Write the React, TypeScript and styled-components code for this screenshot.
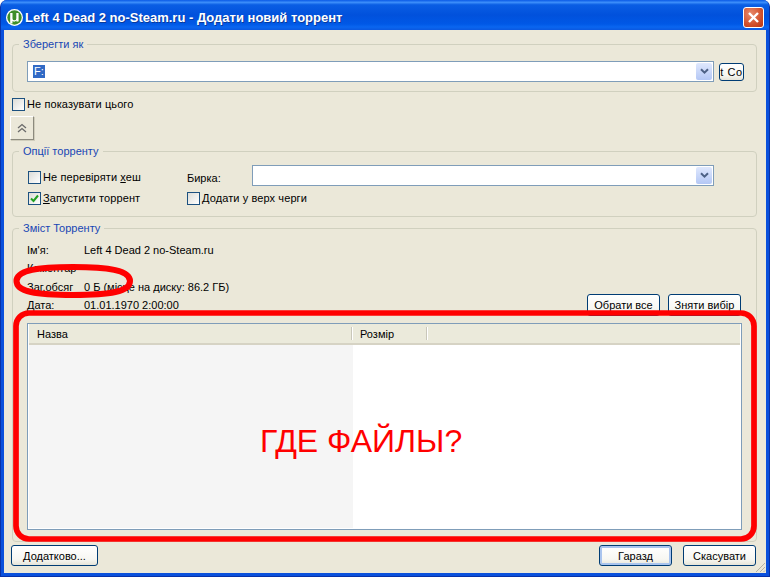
import React from "react";
import styled, { createGlobalStyle } from "styled-components";

const Global = createGlobalStyle`
  html, body { margin: 0; padding: 0; background: #fff; }
  * { box-sizing: border-box; }
  body { font-family: "Liberation Sans", Arial, sans-serif; }
`;

const Win = styled.div`
  position: relative;
  width: 770px;
  height: 577px;
  display: flex;
  flex-direction: column;
  border-radius: 7px 7px 0 0;
  background: #0a50dc;
  border: 1px solid #0831a8;
  border-top: none;
  overflow: hidden;
  font-size: 11px;
  color: #000;
`;
const TitleBar = styled.div`
  height: 30px;
  margin: 0 -1px;
  flex: none;
  display: flex;
  align-items: center;
  padding: 4px 6px 0 6px;
  gap: 2px;
  background: linear-gradient(180deg, #0a5ae6 0%, #3c8efa 8%, #0a5ee4 16%, #0151dc 50%, #0058e6 80%, #0a66f0 90%, #0a58e0 100%);
`;
const Title = styled.div`
  flex: 1;
  color: #fff;
  font-family: "Liberation Sans", Arial, sans-serif;
  font-weight: 700;
  font-size: 13px;
  white-space: nowrap;
  text-shadow: 1px 1px 0 #0a3a9a;
`;
const Close = styled.div`
  width: 21px;
  height: 21px;
  border: 1px solid #fff;
  border-radius: 3px;
  background: radial-gradient(circle at 35% 30%, #e88a6c, #d2502c 60%, #b8340f);
  display: flex;
  align-items: center;
  justify-content: center;
`;
const Body = styled.div`
  flex: 1;
  margin: 0 3px 3px 3px;
  background: #ebe8d9;
  padding: 8px 9px 7px 6px;
  display: flex;
  flex-direction: column;
`;
const Frame = styled.fieldset<{ $h: number; $top?: number }>`
  margin: ${(p) => p.$top ?? 0}px 0 0 2px;
  padding: 0;
  height: ${(p) => p.$h}px;
  flex: none;
  border: 1px solid #d0d0bf;
  border-radius: 4px;
  min-width: 0;
`;
const Legend = styled.legend`
  margin-left: 6px;
  padding: 0 4px;
  color: #1846b4;
  font-size: 11px;
  line-height: 13px;
`;
const SaveRow = styled.div`
  display: flex;
  align-items: center;
  gap: 5px;
  padding: 10px 0 0 14px;
`;
const Combo = styled.div<{ $w: number }>`
  width: ${(p) => p.$w}px;
  height: 21px;
  background: #fff;
  border: 1px solid #7f9db9;
  display: flex;
  align-items: center;
  justify-content: space-between;
  padding: 0 1px 0 5px;
`;
const GridCombo = styled(Combo)`
  margin-bottom: 4px;
`;
const Selected = styled.span`
  background: #316ac5;
  color: #fff;
  line-height: 13px;
  padding: 0 1px;
`;
const DropBtn = styled.div`
  width: 16px;
  height: 17px;
  border-radius: 2px;
  background: linear-gradient(180deg, #dfe8fd, #b4c7f5);
  display: flex;
  align-items: center;
  justify-content: center;
`;
const Btn = styled.div<{ $w: number; $def?: boolean }>`
  width: ${(p) => p.$w}px;
  height: 21px;
  flex: none;
  border: 1px solid #003c74;
  border-radius: 3px;
  background: linear-gradient(180deg, #fff 0%, #f7f7f2 70%, #e6e4d8 100%);
  display: flex;
  align-items: center;
  justify-content: center;
  white-space: nowrap;
  overflow: hidden;
  box-shadow: ${(p) => (p.$def ? "inset 0 0 0 2px #a9c4ee" : "none")};
`;
const SmallBtn = styled(Btn)`
  height: 18px;
  letter-spacing: 0.6px;
`;
const Check = styled.div`
  width: 13px;
  height: 13px;
  flex: none;
  border: 1px solid #1c5180;
  background: linear-gradient(135deg, #dcdcd7, #fff);
  display: flex;
  align-items: center;
  justify-content: center;
`;
const CheckRow = styled.label`
  display: flex;
  align-items: center;
  gap: 2px;
  letter-spacing: 0.1px;
  line-height: 13px;
  white-space: nowrap;
`;
const TopCheck = styled(CheckRow)`
  margin: 6px 0 0 2px;
`;
const WideCheck = styled(CheckRow)`
  grid-column: 2 / 4;
`;
const UpBtn = styled.div`
  width: 24px;
  height: 24px;
  margin-top: 5px;
  background: #ebe8d9;
  border: 1px solid;
  border-color: #fff #8c8a7e #8c8a7e #fff;
  box-shadow: 1px 1px 0 #d0cdbc;
  display: flex;
  align-items: center;
  justify-content: center;
`;
const OptGrid = styled.div`
  display: grid;
  grid-template-columns: 159px 65px 462px;
  grid-auto-rows: 21px;
  padding: 9px 0 0 15px;
  align-items: center;
`;
const Info = styled.div`
  display: grid;
  grid-template-columns: 57px 1fr;
  grid-template-rows: 18px 18px 19px 18px;
  padding: 6px 0 0 14px;
  align-items: center;
  white-space: nowrap;
  height: 71px;
`;
const Wrap = styled.div`
  position: relative;
`;
const SelectBtns = styled.div`
  position: absolute;
  right: 16px;
  top: 77px;
  display: flex;
  gap: 8px;
`;
const WideBtn = styled(Btn)`
  height: 22px;
`;
const Table = styled.div`
  margin: 17px 0 0 14px;
  width: 715px;
  height: 207px;
  border: 1px solid #7f9db9;
  background: #fff;
  display: flex;
  flex-direction: column;
  padding: 0 1px;
`;
const Head = styled.div`
  height: 21px;
  flex: none;
  display: flex;
  background: #ebeadb;
  border-bottom: 2px solid #d6d3c4;
`;
const HeadCell = styled.div<{ $w: number }>`
  width: ${(p) => p.$w}px;
  display: flex;
  align-items: center;
  padding-left: 8px;
  position: relative;
  &::after {
    content: "";
    position: absolute;
    right: 0;
    top: 3px;
    bottom: 3px;
    width: 1px;
    background: #c9c7ba;
    box-shadow: 1px 0 0 #fff;
  }
`;
const Rows = styled.div`
  flex: 1;
  display: flex;
`;
const LeftPane = styled.div`
  width: 324px;
  margin-bottom: 1px;
  background: #f5f5f5;
`;
const Footer = styled.div`
  margin: 0 1px 0 1px;
  display: flex;
  gap: 11px;
`;
const Spacer = styled.div`
  flex: 1;
`;
const Overlay = styled.svg`
  position: absolute;
  left: -1px;
  top: 0;
  pointer-events: none;
`;
const Shout = styled.div`
  position: absolute;
  left: 259px;
  top: 421px;
  font-size: 32px;
  line-height: 40px;
  color: #f00;
  white-space: nowrap;
`;
const Grip = styled.svg`
  position: absolute;
  right: 3px;
  bottom: 3px;
`;

const Chevron = () => (
  <svg width="9" height="7" viewBox="0 0 9 7">
    <path d="M1 1.2 4.5 4.6 8 1.2" fill="none" stroke="#4d6185" strokeWidth="2" />
  </svg>
);
const Tick = () => (
  <svg width="9" height="9" viewBox="0 0 9 9">
    <path d="M1 4.5 3.5 7 8 1.5" fill="none" stroke="#21a121" strokeWidth="2" />
  </svg>
);

export default function App() {
  return (
    <>
      <Global />
      <Win>
        <TitleBar>
          <svg width="17" height="17" viewBox="0 0 17 17">
            <circle cx="8.5" cy="8.5" r="8.5" fill="#fff" />
            <circle cx="8.5" cy="8.5" r="7.2" fill="#3f8f2a" />
            <path d="M4.2 4h2.3v5.4a1.9 1.9 0 0 0 3.8 0V4h2.3v8.6h-2.2v-1a3 3 0 0 1-3.9.4V14.5H4.2z" fill="#fff" />
          </svg>
          <Title>Left 4 Dead 2 no-Steam.ru - Додати новий торрент</Title>
          <Close>
            <svg width="13" height="13" viewBox="0 0 13 13">
              <path d="M2 2 11 11M11 2 2 11" stroke="#fff" strokeWidth="2.4" />
            </svg>
          </Close>
        </TitleBar>
        <Body>
          <Frame $h={54}>
            <Legend>Зберегти як</Legend>
            <SaveRow>
              <Combo $w={687}>
                <Selected>F:</Selected>
                <DropBtn><Chevron /></DropBtn>
              </Combo>
              <SmallBtn $w={25}>t Co</SmallBtn>
            </SaveRow>
          </Frame>
          <TopCheck>
            <Check />
            Не показувати цього
          </TopCheck>
          <UpBtn>
            <svg width="10" height="10" viewBox="0 0 10 10">
              <path d="M1 5 5 1.5 9 5M1 9 5 5.5 9 9" fill="none" stroke="#6a6a6a" strokeWidth="1.3" />
            </svg>
          </UpBtn>
          <Frame $h={72} $top={5}>
            <Legend>Опції торренту</Legend>
            <OptGrid>
              <CheckRow>
                <Check />
                <span>Не перевіряти <u>х</u>еш</span>
              </CheckRow>
              <span>Бирка:</span>
              <GridCombo $w={462}>
                <span />
                <DropBtn><Chevron /></DropBtn>
              </GridCombo>
              <CheckRow>
                <Check><Tick /></Check>
                <span><u>З</u>апустити торрент</span>
              </CheckRow>
              <WideCheck>
                <Check />
                Додати у верх черги
              </WideCheck>
            </OptGrid>
          </Frame>
          <Wrap>
            <Frame $h={320} $top={5}>
              <Legend>Зміст Торренту</Legend>
              <Info>
                <span>Ім'я:</span><span>Left 4 Dead 2 no-Steam.ru</span>
                <span>Коментар</span><span />
                <span>Заг.обсяг</span><span>0 Б (місце на диску: 86.2 ГБ)</span>
                <span>Дата:</span><span>01.01.1970 2:00:00</span>
              </Info>
              <SelectBtns>
                <WideBtn $w={73}>Обрати все</WideBtn>
                <WideBtn $w={73}>Зняти вибір</WideBtn>
              </SelectBtns>
              <Table>
                <Head>
                  <HeadCell $w={323}>Назва</HeadCell>
                  <HeadCell $w={75}>Розмір</HeadCell>
                </Head>
                <Rows><LeftPane /></Rows>
              </Table>
            </Frame>
          </Wrap>
          <Spacer />
          <Footer>
            <Btn $w={87}><span><u>Д</u>одатково...</span></Btn>
            <Spacer />
            <Btn $w={73} $def>Гаразд</Btn>
            <Btn $w={73}>Скасувати</Btn>
          </Footer>
        </Body>
        <Overlay width="770" height="577" viewBox="0 0 770 577">
          <rect x="16" y="313" width="738" height="226" rx="13" fill="none" stroke="#f00" strokeWidth="5.7" />
          <path d="M16.5 281C16.5 271 36 267 73 267C110 267 130 271 130 281C130 292 110 295 73 295C36 295 16.5 292 16.5 281Z" fill="none" stroke="#f00" strokeWidth="6" />
        </Overlay>
        <Shout>ГДЕ ФАЙЛЫ?</Shout>
        <Grip width="12" height="12" viewBox="0 0 12 12">
          <path d="M11 2 2 11M11 6 6 11M11 9.5 9.5 11" stroke="#b5b2a2" strokeWidth="1" />
        </Grip>
      </Win>
    </>
  );
}
